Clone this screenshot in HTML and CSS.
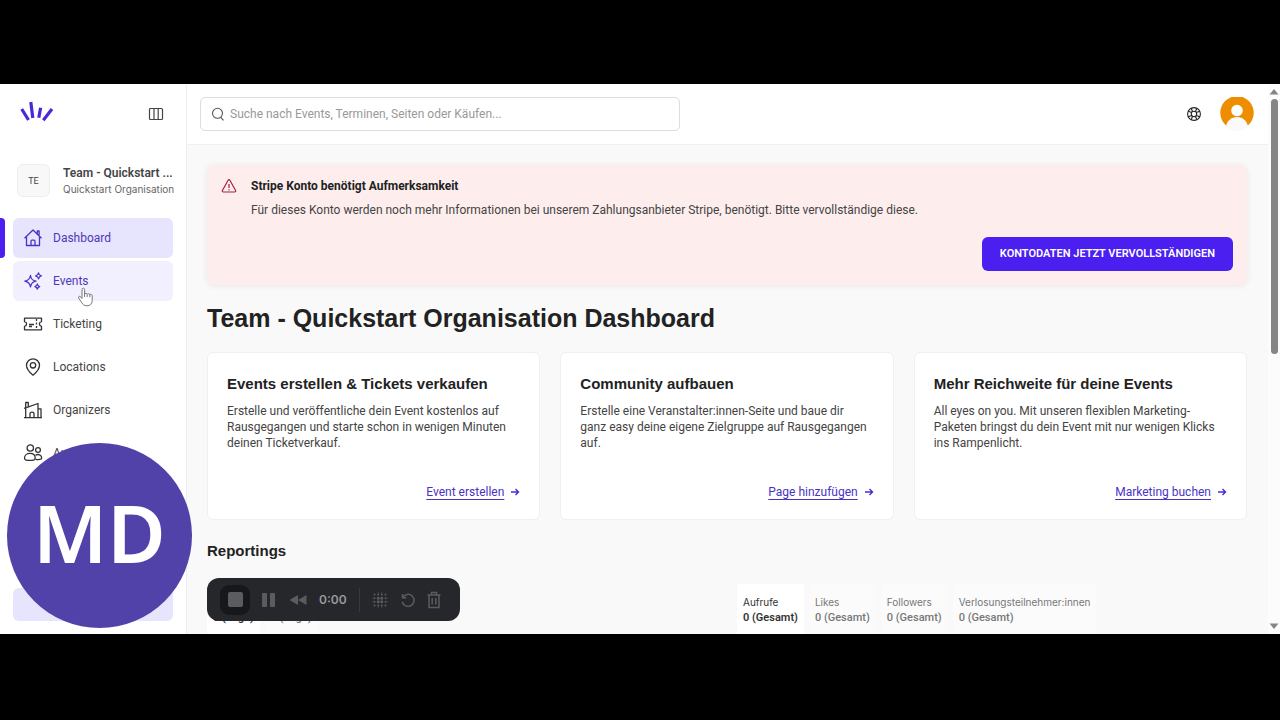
FILE: index.html
```
<!DOCTYPE html>
<html lang="de">
<head>
  <meta charset="UTF-8">
  <meta name="viewport" content="width=device-width, initial-scale=1.0">
  <title>Team - Quickstart Organisation Dashboard</title>
  <link rel="stylesheet" href="styles.css">
</head>

<body>
  <div class="app">
    <aside class="sidebar">
      <div class="sidebar-head">
        <a href="#" class="logo" aria-label="Startseite">
          <svg width="34" height="22" viewBox="0 0 34 22" fill="none" stroke="#4a28d9" stroke-width="3.200">
            <path d="M1.700 8l6.800 11M10.800 1l2 16M20.600 6.700l-1.800 10M32 8l-8.700 11.200"/>
          </svg>
        </a>
        <button class="icon-btn" aria-label="Seitenleiste">
          <svg width="16" height="14" viewBox="0 0 16 14" fill="none" stroke="#444" stroke-width="1.200">
            <rect x="1.500" y="1.500" width="13" height="11" rx="1"/>
            <path d="M6 1.500v11M10.200 1.500v11"/>
          </svg>
        </button>
      </div>

      <div class="team">
        <div class="team-badge">TE</div>
        <div class="team-text">
          <div class="team-name">Team - Quickstart ...</div>
          <div class="team-org">Quickstart Organisation</div>
        </div>
      </div>

      <nav class="nav">
        <a href="#" class="nav-item active">
          <svg class="nav-icon" viewBox="0 0 20 20">
            <path d="M1.500 10.200L10 2l8.500 8.200M3.500 8.500v9h13v-9M14.300 5.500V3h1.800v4M8 17.500v-4.300c0-.6.400-1 1-1h2c.6 0 1 .4 1 1v4.300"/>
          </svg>
          Dashboard
        </a>
        <a href="#" class="nav-item hover">
          <svg class="nav-icon" viewBox="0 0 20 20">
            <path d="M7.500 4.500c.6 3.600 1.700 4.900 5.500 5.700-3.800.8-4.900 2.100-5.500 5.700-.6-3.600-1.900-4.900-5.700-5.700 3.800-.8 5.100-2.100 5.700-5.700zM15.500 1.800c.3 1.900 1 2.600 2.900 3-1.900.4-2.600 1.100-2.900 3-.4-1.900-1-2.600-2.900-3 1.900-.4 2.500-1.100 2.900-3zM14.300 13c.3 1.600.9 2.200 2.400 2.600-1.500.3-2.100 1-2.400 2.600-.3-1.600-.9-2.300-2.400-2.600 1.500-.4 2.100-1 2.400-2.600z"/>
          </svg>
          Events
        </a>
        <a href="#" class="nav-item">
          <svg class="nav-icon" viewBox="0 0 20 20">
            <path d="M1.500 4.200h17v3.500c-1.600.3-2.100 1.200-2.100 2.300s.5 2 2.100 2.300v3.500h-17v-3.500c1.600-.3 2.100-1.200 2.100-2.300s-.5-2-2.100-2.300zM6 10.500h5M6 12.500h3"/>
            <path d="M13.500 5v10" stroke-dasharray="2 1.500"/>
          </svg>
          Ticketing
        </a>
        <a href="#" class="nav-item">
          <svg class="nav-icon" viewBox="0 0 20 20">
            <path d="M10 18.200C6 15 3.500 12 3.500 8.300a6.500 6.500 0 0 1 13 0c0 3.700-2.500 6.700-6.500 9.900z"/>
            <circle cx="10" cy="8.300" r="2.700"/>
          </svg>
          Locations
        </a>
        <a href="#" class="nav-item">
          <svg class="nav-icon" viewBox="0 0 20 20">
            <path d="M1 17.700h18M2.700 17.700V2.500h2.600v4M2.700 7.800L15 3.500v14.200M15 8.800h3v8.900M1.200 8.400l1.500-.6M7 17.700v-4.200c0-1.800 4-1.800 4 0v4.200"/>
          </svg>
          Organizers
        </a>
        <a href="#" class="nav-item">
          <svg class="nav-icon" viewBox="0 0 20 20">
            <circle cx="7.300" cy="5" r="3.200"/>
            <circle cx="15" cy="7" r="2.400"/>
            <path d="M1.500 15.200c0-3 2.400-4.800 5.400-4.800s5.300 1.800 5.300 4.800c0 3-10.700 3-10.700 0zM12.500 12.200c2.700-1.600 6.200-.2 6.200 2.700 0 1.700-3.400 2-6 1.500"/>
          </svg>
          Audience
        </a>
      </nav>

      <button class="sidebar-action" aria-label="Erstellen"></button>
    </aside>

    <div class="main">
      <header class="topbar">
        <label class="search">
          <svg width="14" height="14" viewBox="0 0 14 14" fill="none" stroke="#555" stroke-width="1.100">
            <circle cx="6.500" cy="6.300" r="5"/>
            <path d="M9.800 10.300l2.700 3"/>
          </svg>
          <input type="search" placeholder="Suche nach Events, Terminen, Seiten oder Käufen..." aria-label="Suche">
        </label>
        <div class="topbar-right">
          <button class="icon-btn" aria-label="Hilfe">
            <svg width="16" height="16" viewBox="0 0 16 16" fill="none" stroke="#222" stroke-width="1.100">
              <circle cx="8" cy="8" r="6.400"/>
              <circle cx="8" cy="8" r="2.700"/>
              <path d="M5.300 2.200l1.200 3.500M2.200 5.300l3.500 1.200M10.700 2.200L9.500 5.700M13.800 5.300l-3.500 1.200M5.300 13.800l1.200-3.500M2.200 10.700l3.500-1.200M10.700 13.800l-1.200-3.500M13.800 10.700l-3.500-1.200"/>
            </svg>
          </button>
          <button class="avatar" aria-label="Profil">
            <svg width="34" height="34" viewBox="0 0 34 34">
              <path d="M6.200 28.500a16.700 16.700 0 1 1 21.600 0C26.500 23.500 22.500 20 17 20S7.500 23.500 6.200 28.500z" fill="#ee8d00"/>
              <circle cx="17" cy="13.500" r="5.800" fill="#fff"/>
            </svg>
          </button>
        </div>
      </header>

      <main class="content">
        <section class="alert">
          <svg class="alert-icon" width="16" height="16" viewBox="0 0 16 16" fill="none" stroke="#a82040" stroke-width="1.200" stroke-linejoin="round">
            <path d="M7.100 2.200c.4-.7 1.400-.7 1.800 0l5.700 10.300c.4.700-.1 1.500-.9 1.500H2.300c-.8 0-1.300-.8-.9-1.500z"/>
            <path d="M8 6v4M8 11.200v1.200"/>
          </svg>
          <div class="alert-body">
            <h2>Stripe Konto benötigt Aufmerksamkeit</h2>
            <p>Für dieses Konto werden noch mehr Informationen bei unserem Zahlungsanbieter Stripe, benötigt. Bitte vervollständige diese.</p>
            <button class="btn-primary">KONTODATEN JETZT VERVOLLSTÄNDIGEN</button>
          </div>
        </section>

        <h1>Team - Quickstart Organisation Dashboard</h1>

        <div class="cards">
          <article class="card">
            <h3>Events erstellen &amp; Tickets verkaufen</h3>
            <p>Erstelle und veröffentliche dein Event kostenlos auf Rausgegangen und starte schon in wenigen Minuten deinen Ticketverkauf.</p>
            <div class="card-link">
              <a href="#">Event erstellen</a>
              <svg class="arrow" viewBox="0 0 10 10"><path d="M1 5h7.500M5.500 2l3 3-3 3"/></svg>
            </div>
          </article>
          <article class="card">
            <h3>Community aufbauen</h3>
            <p>Erstelle eine Veranstalter:innen-Seite und baue dir ganz easy deine eigene Zielgruppe auf Rausgegangen auf.</p>
            <div class="card-link">
              <a href="#">Page hinzufügen</a>
              <svg class="arrow" viewBox="0 0 10 10"><path d="M1 5h7.500M5.500 2l3 3-3 3"/></svg>
            </div>
          </article>
          <article class="card">
            <h3>Mehr Reichweite für deine Events</h3>
            <p>All eyes on you. Mit unseren flexiblen Marketing-Paketen bringst du dein Event mit nur wenigen Klicks ins Rampenlicht.</p>
            <div class="card-link">
              <a href="#">Marketing buchen</a>
              <svg class="arrow" viewBox="0 0 10 10"><path d="M1 5h7.500M5.500 2l3 3-3 3"/></svg>
            </div>
          </article>
        </div>

        <h2 class="section-title">Reportings</h2>

        <div class="reports">
          <div class="tabs">
            <button class="tab active"><span>Tickets</span><strong>0 (Tage)</strong></button>
            <button class="tab"><span>Umsatz</span><strong>0 (Tage)</strong></button>
          </div>
          <div class="tabs">
            <button class="tab active"><span>Aufrufe</span><strong>0 (Gesamt)</strong></button>
            <button class="tab"><span>Likes</span><strong>0 (Gesamt)</strong></button>
            <button class="tab"><span>Followers</span><strong>0 (Gesamt)</strong></button>
            <button class="tab"><span>Verlosungsteilnehmer:innen</span><strong>0 (Gesamt)</strong></button>
          </div>
        </div>
      </main>
    </div>

    <div class="scrollbar">
      <svg width="10" height="6" viewBox="0 0 10 6"><path d="M5 0l4.500 5.500h-9z" fill="#858585"/></svg>
      <div class="scroll-track"><div class="scroll-thumb"></div></div>
      <svg width="10" height="6" viewBox="0 0 10 6"><path d="M5 6L.5.500h9z" fill="#858585"/></svg>
    </div>

    <svg class="cursor" width="18" height="20" viewBox="0 0 18 20">
      <path d="M5 11.500V2.600c0-1.900 2.600-1.900 2.600 0v4.600c.2-1.300 2.500-1.200 2.600.2.300-1.100 2.400-1 2.600.5.400-1 2.400-.8 2.400 1v4.500c0 3.400-1.900 5.400-5.200 5.400-2.800 0-4-1.200-5.300-3.200l-3-4.500c-.8-1.500.9-2.500 2-1.300zM7.600 7v3M10.200 7.600V10M12.800 8v2.200" fill="#fff" stroke="#777" stroke-width="1"/>
    </svg>

    <div class="presenter">MD</div>

    <div class="recorder">
      <button class="rec-stop" aria-label="Stop"><span></span></button>
      <button aria-label="Pause">
        <svg width="14" height="16" viewBox="0 0 14 16" fill="#5b5c60"><rect x="0" y="1" width="5" height="14" rx="1"/><rect x="8" y="1" width="5" height="14" rx="1"/></svg>
      </button>
      <button aria-label="Zurück">
        <svg width="18" height="12" viewBox="0 0 18 12" fill="#5b5c60"><path d="M9 1v10L.5 6zM17.500 1v10L9 6z"/></svg>
      </button>
      <span class="rec-time">0:00</span>
      <span class="rec-divider"></span>
      <button aria-label="Effekte">
        <svg width="16" height="16" viewBox="0 0 16 16" stroke="#5b5c60" stroke-linecap="round" fill="none">
          <path d="M6.200 6.200h.01M9.800 6.200h.01M6.200 9.800h.01M9.800 9.800h.01" stroke-width="3"/>
          <path d="M2.500 2.500h.01M6.200 2.500h.01M9.800 2.500h.01M13.500 2.500h.01M2.500 6.200h.01M13.500 6.200h.01M2.500 9.800h.01M13.500 9.800h.01M2.500 13.500h.01M6.200 13.500h.01M9.800 13.500h.01M13.500 13.500h.01" stroke-width="2"/>
          <path d="M.8 6.200h.01M.8 9.800h.01M15.200 6.200h.01M15.200 9.800h.01M6.200.8h.01M9.800.8h.01M6.200 15.200h.01M9.800 15.200h.01" stroke-width="1"/>
        </svg>
      </button>
      <button aria-label="Neu starten">
        <svg width="14" height="14" viewBox="0 0 14 14" fill="none" stroke="#5b5c60" stroke-width="1.500"><path d="M1.500 1v3.800h3.800M1.700 4.600A6 6 0 1 1 1.200 8.800"/></svg>
      </button>
      <button aria-label="Löschen">
        <svg width="14" height="18" viewBox="0 0 14 18" fill="none" stroke="#5b5c60" stroke-width="1.500"><path d="M.5 4h13M4.500 3.800V1.500h5v2.300M2 4v12.500h10V4M5.200 7v6.500M8.800 7v6.500"/></svg>
      </button>
    </div>
  </div>
</body>
</html>
```
FILE: styles.css
```
* {
  box-sizing: border-box;
}

body {
  margin: 0;
  padding: 84px 0 86px;
  height: 100vh;
  background: #000;
  color: #444;
  font-family: Roboto, "Liberation Sans", sans-serif;
  font-size: 12px;
  line-height: 16px;
}

h1, h2, h3, p {
  margin: 0;
}

h1, h2, h3 {
  font-family: "Liberation Sans", Arial, sans-serif;
  font-weight: bold;
  color: #222;
}

button {
  padding: 0;
  border: none;
  background: none;
  font: inherit;
  color: inherit;
  cursor: pointer;
}

svg {
  display: block;
  flex: none;
}

.app {
  position: relative;
  display: flex;
  height: 100%;
  overflow: hidden;
  background: #f9f9f9;
}

/* sidebar */
.sidebar {
  display: flex;
  flex-direction: column;
  flex: none;
  width: 187px;
  padding: 16px 13px 13px;
  background: #fff;
  border-right: 1px solid #eee;
}

.sidebar-head {
  display: flex;
  align-items: center;
  justify-content: space-between;
  height: 28px;
  padding: 0 9px 0 7px;
}

.logo {
  padding-bottom: 4px;
}

.team {
  display: flex;
  align-items: center;
  gap: 13px;
  margin: 36px 0 21px;
  padding-left: 4px;
}

.team-badge {
  flex: none;
  width: 33px;
  height: 33px;
  border: 1px solid #eee;
  border-radius: 6px;
  background: #f8f8f8;
  font-size: 9px;
  line-height: 32px;
  text-align: center;
}

.team-text {
  min-width: 0;
}

.team-name {
  font-weight: 600;
  white-space: nowrap;
}

.team-org {
  color: #666;
  font-family: Inter, sans-serif;
  font-size: 10px;
  white-space: nowrap;
}

.nav {
  display: flex;
  flex-direction: column;
  gap: 3px;
}

.nav-item {
  position: relative;
  display: flex;
  align-items: center;
  gap: 10px;
  height: 40px;
  padding-left: 10px;
  border-radius: 6px;
  color: #444;
  text-decoration: none;
}

.nav-icon {
  width: 20px;
  height: 20px;
  fill: none;
  stroke: #333;
  stroke-width: 1.3;
  stroke-linejoin: round;
}

.nav-item.active {
  background: #e7e4fd;
  color: #4e38b8;
}

.nav-item.active::before {
  content: "";
  position: absolute;
  left: -13px;
  width: 5px;
  height: 40px;
  border-radius: 0 4px 4px 0;
  background: #4a1ff0;
}

.nav-item.hover {
  background: #f2effe;
  color: #4e38b8;
}

.nav-item.active .nav-icon,
.nav-item.hover .nav-icon {
  stroke: #4a33c4;
}

.sidebar-action {
  height: 33px;
  margin-top: auto;
  border-radius: 6px;
  background: #e7e4fd;
}

/* main column */
.main {
  display: flex;
  flex: 1;
  flex-direction: column;
  min-width: 0;
}

.topbar {
  display: flex;
  align-items: center;
  justify-content: space-between;
  flex: none;
  height: 61px;
  padding: 0 14px 0 13px;
  background: #fff;
  border-bottom: 1px solid #f0f0f0;
}

.search {
  display: flex;
  align-items: center;
  gap: 5px;
  flex: 0 1 480px;
  height: 34px;
  padding: 0 10px;
  border: 1px solid #ddd;
  border-radius: 5px;
}

.search input {
  flex: 1;
  min-width: 0;
  padding: 0;
  border: none;
  outline: none;
  background: none;
  font: inherit;
}

.search input::placeholder {
  color: #999;
}

.topbar-right {
  display: flex;
  align-items: center;
  gap: 18px;
}

.avatar {
  width: 34px;
  height: 34px;
  border-radius: 50%;
  background: #fafafa;
}

.content {
  flex: 1;
  min-height: 0;
  overflow: hidden;
  padding: 20px 21px 0 20px;
}

.alert {
  display: flex;
  gap: 14px;
  padding: 13px 14px 14px;
  border-radius: 8px;
  background: #fdeeed;
  box-shadow: 0 1px 6px rgba(0, 0, 0, 0.08);
}

.alert-body {
  display: flex;
  flex: 1;
  flex-direction: column;
}

.alert h2 {
  font-family: Roboto, sans-serif;
  font-size: 12px;
}

.alert p {
  margin: 8px 0 19px;
}

.btn-primary {
  align-self: flex-end;
  height: 34px;
  padding: 0 18px;
  border-radius: 6px;
  background: #4a1ff0;
  color: #fff;
  font-size: 11px;
  font-weight: 600;
}

h1 {
  margin: 16px 0 17px;
  font-size: 25px;
  line-height: 34px;
}

.cards {
  display: grid;
  grid-template-columns: repeat(3, 1fr);
  gap: 20px;
}

.card {
  display: flex;
  flex-direction: column;
  min-height: 168px;
  padding: 21px 19px 19px;
  border: 1px solid #f0f0f0;
  border-radius: 6px;
  background: #fff;
}

.card h3 {
  font-size: 15px;
  line-height: 20px;
}

.card p {
  margin-top: 9px;
  padding-right: 6px;
}

.card-link {
  display: flex;
  align-items: center;
  justify-content: flex-end;
  gap: 6px;
  margin-top: auto;
}

.card-link a {
  color: #4a33c4;
  text-decoration: underline;
  text-underline-offset: 3px;
}

.arrow {
  width: 10px;
  height: 10px;
  fill: none;
  stroke: #4a28d9;
  stroke-width: 1.4;
}

.section-title {
  margin: 21px 0 23px;
  font-size: 15px;
  line-height: 20px;
}

.reports {
  display: grid;
  grid-template-columns: 1fr 1fr;
  gap: 20px;
}

.tabs {
  display: flex;
  gap: 5px;
}

.tab {
  display: flex;
  flex-direction: column;
  height: 60px;
  padding: 10px 6px;
  background: #fbfbfb;
  color: #777;
  font-size: 11px;
  text-align: left;
  white-space: nowrap;
}

.tab span {
  font-family: Inter, sans-serif;
  font-size: 10px;
}

.tab strong {
  font-weight: 500;
}

.tab.active {
  background: #fff;
  color: #333;
}

.tab.active strong {
  font-weight: 600;
}

/* window scrollbar */
.scrollbar {
  display: flex;
  flex-direction: column;
  align-items: center;
  flex: none;
  width: 12px;
  padding: 5px 0;
  background: #fcfcfc;
}

.scroll-track {
  flex: 1;
  padding: 4px 0;
}

.scroll-thumb {
  width: 7px;
  height: 49%;
  border-radius: 4px;
  background: #858585;
}

/* overlays */
.cursor {
  position: absolute;
  left: 77px;
  top: 203px;
}

.presenter {
  position: absolute;
  left: 7px;
  bottom: 6px;
  width: 185px;
  height: 185px;
  border-radius: 50%;
  background: #5142a9;
  color: #fff;
  font-family: "Noto Sans", sans-serif;
  font-size: 80px;
  font-weight: 600;
  line-height: 177px;
  text-align: center;
}

.recorder {
  position: absolute;
  left: 207px;
  bottom: 13px;
  display: flex;
  align-items: center;
  justify-content: space-between;
  width: 253px;
  height: 43px;
  padding: 0 19px 0 13px;
  border-radius: 12px;
  background: #26272b;
}

.rec-stop {
  display: flex;
  align-items: center;
  justify-content: center;
  width: 30px;
  height: 30px;
  border-radius: 9px;
  background: #17181c;
}

.rec-stop span {
  width: 15px;
  height: 15px;
  border-radius: 2px;
  background: #5b5c60;
}

.rec-time {
  color: #98999d;
  font-family: Inter, sans-serif;
  font-weight: 600;
}

.rec-divider {
  width: 1px;
  height: 24px;
  background: #38393d;
}
```
